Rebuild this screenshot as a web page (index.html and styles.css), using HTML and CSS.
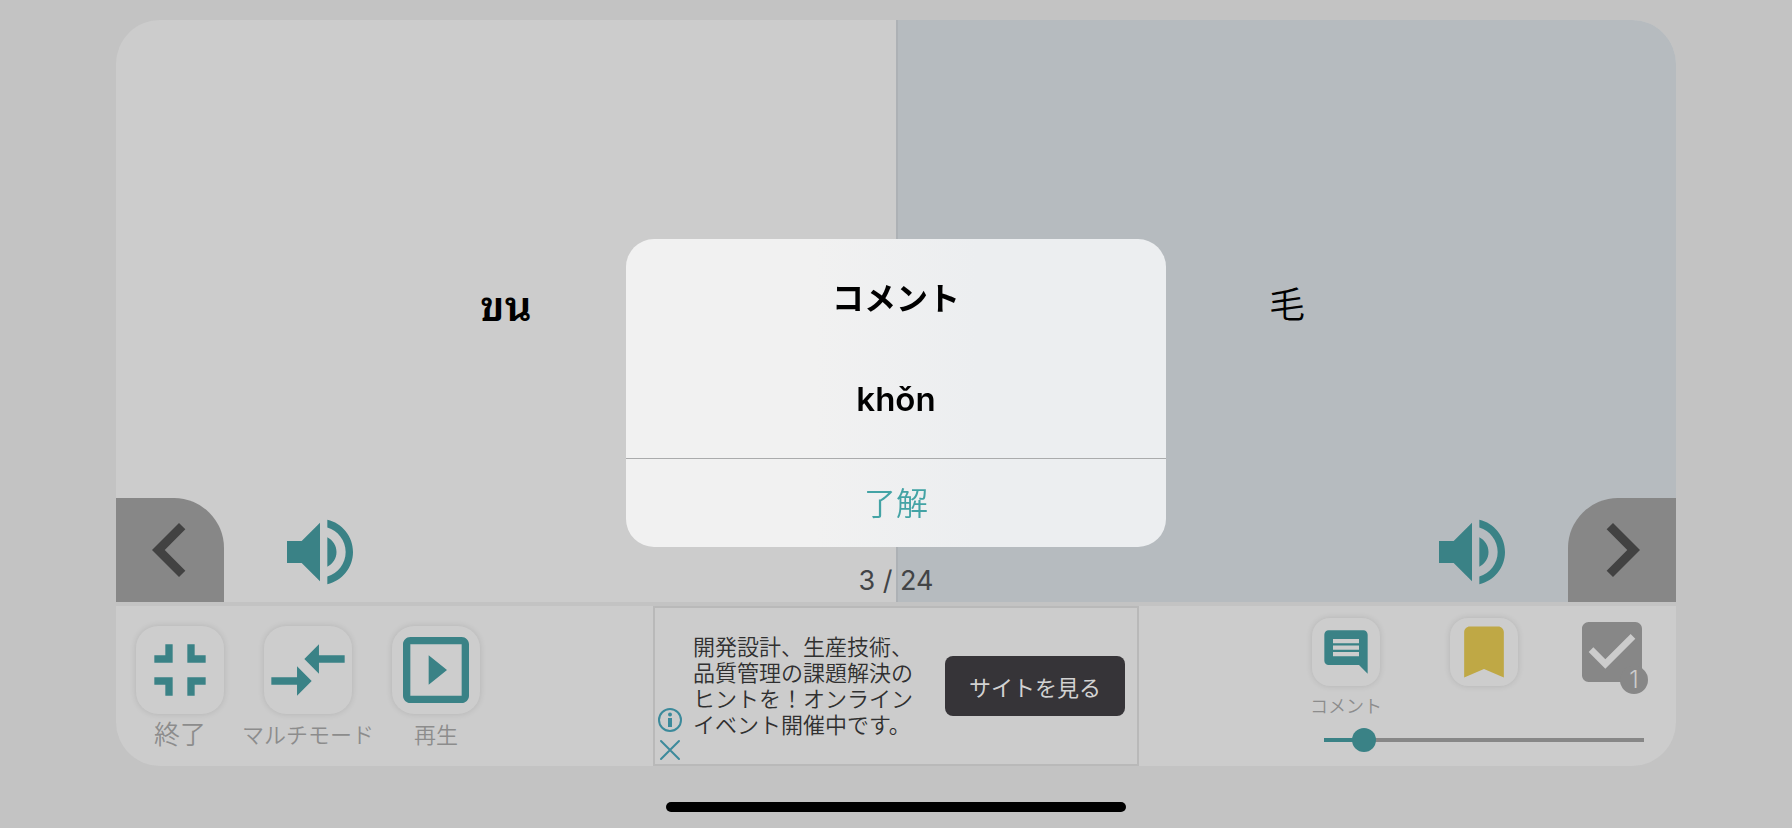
FILE: index.html
```
<!DOCTYPE html>
<html lang="ja">
<head>
    <meta charset="UTF-8">
    <title>コメント</title>
    <link rel="stylesheet" href="styles.css">
</head>
<body>
    <main class="card">
        <!-- Word and translation -->
        <section class="stage">
            <div class="panel panel-front">
                <p class="word word-thai" lang="th">ขน</p>
                <div class="panel-controls">
                    <button class="nav nav-prev" aria-label="前へ">
                        <svg viewBox="0 0 24 24"><path d="M15.41 16.59L10.83 12l4.58-4.59L14 6l-6 6 6 6z"/></svg>
                    </button>
                    <button class="speaker" aria-label="音声">
                        <svg viewBox="0 0 24 24"><path d="M3 9v6h4l5 5V4L7 9H3zm13.5 3c0-1.77-1.02-3.29-2.5-4.03v8.05c1.48-.73 2.5-2.25 2.5-4.02zM14 3.23v2.06c2.89.86 5 3.54 5 6.71s-2.11 5.85-5 6.71v2.06c4.01-.91 7-4.49 7-8.77s-2.99-7.86-7-8.77z"/></svg>
                    </button>
                </div>
            </div>
            <div class="panel panel-back">
                <p class="word">毛</p>
                <div class="panel-controls">
                    <button class="speaker" aria-label="音声">
                        <svg viewBox="0 0 24 24"><path d="M3 9v6h4l5 5V4L7 9H3zm13.5 3c0-1.77-1.02-3.29-2.5-4.03v8.05c1.48-.73 2.5-2.25 2.5-4.02zM14 3.23v2.06c2.89.86 5 3.54 5 6.71s-2.11 5.85-5 6.71v2.06c4.01-.91 7-4.49 7-8.77s-2.99-7.86-7-8.77z"/></svg>
                    </button>
                    <button class="nav nav-next" aria-label="次へ">
                        <svg viewBox="0 0 24 24"><path d="M8.59 16.59L13.17 12 8.59 7.41 10 6l6 6-6 6z"/></svg>
                    </button>
                </div>
            </div>
            <p class="counter">3 / 24</p>
        </section>

        <!-- Toolbar -->
        <section class="toolbar">
            <div class="modes">
                <div class="mode">
                    <button class="tile" aria-labelledby="label-exit">
                        <svg viewBox="0 0 24 24"><path d="M5 16h3v3h2v-5H5v2zm3-8H5v2h5V5H8v3zm6 11h2v-3h3v-2h-5v5zm2-11V5h-2v5h5V8h-3z"/></svg>
                    </button>
                    <span class="mode-label mode-label-large" id="label-exit">終了</span>
                </div>
                <div class="mode">
                    <button class="tile" aria-labelledby="label-multi">
                        <svg viewBox="0 0 24 24"><path d="M9.01 14H2v2h7.01v3L13 15l-3.99-4v3zm5.98-1v-3H22V8h-7.01V5L11 9l3.99 4z"/></svg>
                    </button>
                    <span class="mode-label" id="label-multi">マルチモード</span>
                </div>
                <div class="mode">
                    <button class="tile" aria-labelledby="label-play">
                        <svg viewBox="0 0 24 24"><path d="M10 8v8l5-4-5-4zm9-5H5c-1.1 0-2 .9-2 2v14c0 1.1.9 2 2 2h14c1.1 0 2-.9 2-2V5c0-1.1-.9-2-2-2zm0 16H5V5h14v14z"/></svg>
                    </button>
                    <span class="mode-label" id="label-play">再生</span>
                </div>
            </div>

            <aside class="ad">
                <div class="ad-icons">
                    <button class="ad-icon" aria-label="広告について">
                        <svg viewBox="0 0 24 24"><circle cx="12" cy="12" r="11" fill="none" stroke="currentColor" stroke-width="2"/><circle cx="12" cy="6.5" r="2"/><path d="M10 10h4v9h-4z"/></svg>
                    </button>
                    <button class="ad-icon" aria-label="広告を閉じる">
                        <svg viewBox="0 0 24 24"><path d="M3 3l18 18M21 3L3 21" fill="none" stroke="currentColor" stroke-width="2" stroke-linecap="round"/></svg>
                    </button>
                </div>
                <p class="ad-text">開発設計、生産技術、<br>品質管理の課題解決の<br>ヒントを！オンライン<br>イベント開催中です。</p>
                <button class="ad-button">サイトを見る</button>
            </aside>

            <div class="actions">
                <div class="action-row">
                    <div class="action">
                        <button class="tile tile-small" aria-labelledby="label-comment">
                            <svg class="icon-comment" viewBox="0 0 24 24"><path d="M21.99 4c0-1.1-.89-2-1.99-2H4c-1.1 0-2 .9-2 2v12c0 1.1.9 2 2 2h14l4 4-.01-18zM18 14H6v-2h12v2zm0-3H6V9h12v2zm0-3H6V6h12v2z"/></svg>
                        </button>
                        <span class="action-label" id="label-comment">コメント</span>
                    </div>
                    <button class="tile tile-small bookmark" aria-label="ブックマーク">
                        <svg viewBox="0 0 24 24"><path d="M17 3H7c-1.1 0-2 .9-2 2v16l7-3 7 3V5c0-1.1-.9-2-2-2z"/></svg>
                    </button>
                    <button class="check" aria-label="チェック">
                        <svg viewBox="0 0 24 24"><path d="M19 3H5c-1.1 0-2 .9-2 2v14c0 1.1.9 2 2 2h14c1.1 0 2-.9 2-2V5c0-1.1-.9-2-2-2zm-9 14l-5-5 1.41-1.41L10 14.17l7.59-7.59L19 8l-9 9z"/></svg>
                        <span class="badge">1</span>
                    </button>
                </div>
                <input class="slider" type="range" min="0" max="24" value="3" aria-label="カード番号">
            </div>
        </section>
    </main>
    <footer class="home"><div class="home-bar"></div></footer>

    <!-- Comment dialog -->
    <div class="overlay">
        <div class="dialog" role="dialog" aria-labelledby="dialog-title">
            <div class="dialog-body">
                <h2 class="dialog-title" id="dialog-title">コメント</h2>
                <p class="dialog-text">khǒn</p>
            </div>
            <button class="dialog-button">了解</button>
        </div>
    </div>
</body>
</html>
```
FILE: styles.css
```
* {
    box-sizing: border-box;
}
body {
    margin: 0;
    height: 100vh;
    display: flex;
    flex-direction: column;
    background-color: #c3c3c3;
    font-family: Inter, "Noto Sans CJK JP", sans-serif;
    color: #000;
}
p, h2 {
    margin: 0;
}
button {
    padding: 0;
    border: none;
    background: none;
    font-family: inherit;
    color: #3a8286;
    cursor: pointer;
}
svg {
    display: block;
    flex: none;
    fill: currentColor;
}
.card {
    flex: 1;
    display: flex;
    flex-direction: column;
    margin: 20px 116px 0;
    border-radius: 44px;
    background-color: #ccc;
    overflow: hidden;
}

/* Word and translation */
.stage {
    flex: 1;
    display: grid;
    grid-template-columns: 1fr 1fr;
    border-bottom: 4px solid #c3c3c3;
}
.panel {
    grid-row: 1;
    display: grid;
}
.panel-front {
    grid-column: 1;
}
.panel-back {
    grid-column: 2;
    border-left: 2px solid #adb1b5;
    background-color: #b6bbbf;
}
.word {
    grid-area: 1 / 1;
    place-self: center;
    padding-bottom: 18px;
    font-size: 36px;
    font-weight: 350;
}
.word-thai {
    font-family: "Noto Sans Thai Looped", Loma, "Noto Serif Thai", serif;
    font-size: 42px;
    font-weight: 600;
}
.panel-controls {
    grid-area: 1 / 1;
    align-self: end;
    display: flex;
    align-items: center;
    gap: 52px;
}
.panel-back .panel-controls {
    justify-content: flex-end;
}
.nav {
    width: 108px;
    height: 104px;
    display: flex;
    align-items: center;
    justify-content: center;
    background-color: #878787;
    color: #424242;
}
.nav-prev {
    border-top-right-radius: 50px;
}
.nav-next {
    border-top-left-radius: 50px;
}
.nav svg {
    width: 108px;
    height: 108px;
}
.speaker {
    padding-top: 4px;
}
.speaker svg {
    width: 88px;
    height: 88px;
}
.counter {
    grid-row: 1;
    grid-column: 1 / 3;
    place-self: end center;
    font-size: 27px;
    line-height: 42px;
    color: #424446;
}

/* Toolbar */
.toolbar {
    display: grid;
    grid-template-columns: 1fr auto 1fr;
}
.modes {
    display: flex;
    padding-top: 20px;
}
.mode {
    width: 128px;
    display: flex;
    flex-direction: column;
    align-items: center;
}
.mode-label {
    font-size: 22px;
    font-weight: 350;
    line-height: 42px;
    white-space: nowrap;
    color: #8c8c8c;
}
.mode-label-large {
    font-size: 26px;
}
.tile {
    width: 88px;
    height: 88px;
    display: flex;
    align-items: center;
    justify-content: center;
    border-radius: 22px;
    background-color: #cdcdcd;
    box-shadow: 0 0 6px rgba(0, 0, 0, 0.12);
}
.tile svg {
    width: 88px;
    height: 88px;
}
.tile-small {
    width: 68px;
    height: 68px;
    border-radius: 18px;
}
.tile-small svg {
    width: 68px;
    height: 68px;
}
.tile-small .icon-comment {
    width: 52px;
    height: 52px;
}
.bookmark {
    color: #bfa845;
}

/* Ad */
.ad {
    width: 486px;
    display: flex;
    align-items: center;
    border: 2px solid #b9b9b9;
    padding-right: 12px;
}
.ad-icons {
    align-self: flex-end;
    display: flex;
    flex-direction: column;
    gap: 6px;
    padding: 2px 11px 2px 3px;
}
.ad-icon {
    color: #3c8a9b;
}
.ad-icon svg {
    width: 24px;
    height: 24px;
}
.ad-text {
    font-size: 22px;
    font-weight: 350;
    line-height: 26px;
    white-space: nowrap;
    color: #303030;
}
.ad-button {
    width: 180px;
    height: 60px;
    margin-left: auto;
    border-radius: 8px;
    background-color: #363438;
    font-size: 22px;
    color: #d2d2d2;
}

/* Actions */
.actions {
    justify-self: end;
    display: flex;
    flex-direction: column;
    padding: 12px 20px 14px 0;
}
.action-row {
    display: flex;
    align-items: flex-start;
    gap: 64px;
}
.action {
    width: 80px;
    display: flex;
    flex-direction: column;
    align-items: center;
}
.action-label {
    font-size: 18px;
    font-weight: 350;
    line-height: 42px;
    color: #8c8c8c;
}
.check {
    position: relative;
    width: 60px;
    height: 68px;
    margin-right: 14px;
    display: flex;
    align-items: center;
    justify-content: center;
    color: #878787;
}
.check svg {
    width: 80px;
    height: 80px;
}
.badge {
    position: absolute;
    right: -6px;
    bottom: -8px;
    width: 28px;
    height: 28px;
    border-radius: 50%;
    background-color: #878787;
    font-size: 24px;
    font-weight: 300;
    line-height: 28px;
    color: #ccc;
}
.slider {
    align-self: flex-end;
    width: 344px;
    height: 24px;
    margin: 0;
    background: none;
    -webkit-appearance: none;
    appearance: none;
}
.slider::-webkit-slider-runnable-track {
    height: 4px;
    background: linear-gradient(to right, transparent 12px, #3a8286 12px, #3a8286 52px, #878787 52px, #878787 calc(100% - 12px), transparent calc(100% - 12px));
}
.slider::-webkit-slider-thumb {
    -webkit-appearance: none;
    width: 24px;
    height: 24px;
    margin-top: -10px;
    border-radius: 50%;
    background-color: #3a8286;
}

/* Home bar */
.home {
    height: 62px;
    display: flex;
    justify-content: center;
    align-items: flex-end;
    padding-bottom: 16px;
}
.home-bar {
    width: 460px;
    height: 10px;
    border-radius: 5px;
    background-color: #000;
}

/* Dialog */
.overlay {
    position: fixed;
    inset: 0;
    display: flex;
    align-items: center;
    justify-content: center;
    padding-bottom: 42px;
}
.dialog {
    width: 540px;
    border-radius: 28px;
    background: linear-gradient(to right, #f1f1f1 35%, #eceef0 65%);
    overflow: hidden;
    text-align: center;
}
.dialog-body {
    padding: 36px 32px 35px;
    border-bottom: 1px solid #aaabac;
}
.dialog-title {
    font-size: 32px;
    font-weight: bold;
    line-height: 48px;
}
.dialog-text {
    margin-top: 52px;
    font-size: 33px;
    font-weight: 600;
    line-height: 48px;
}
.dialog-button {
    display: block;
    width: 100%;
    height: 88px;
    padding-bottom: 4px;
    font-size: 32px;
    font-weight: 350;
    color: #43a3a5;
}
```
